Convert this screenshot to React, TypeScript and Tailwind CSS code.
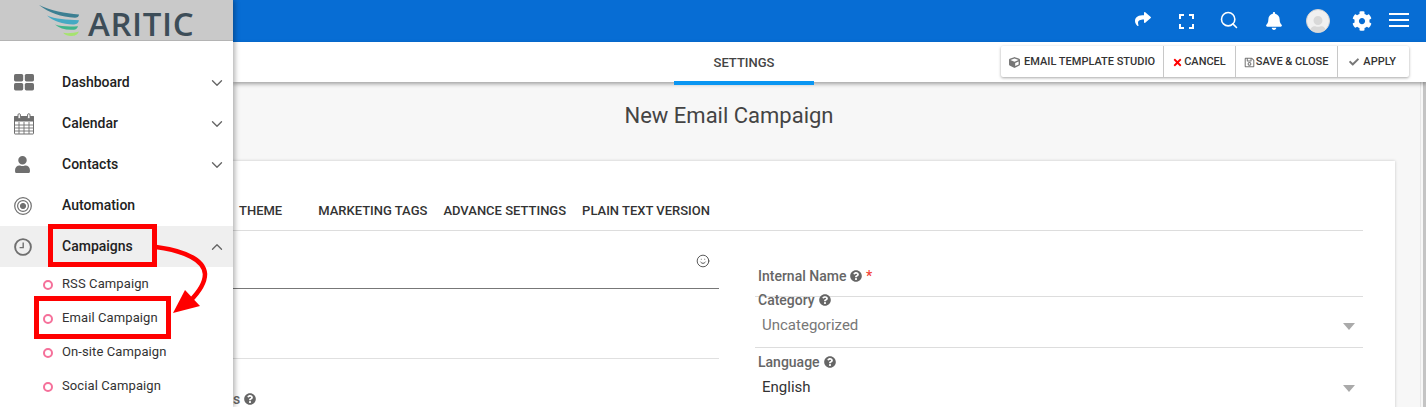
import React from 'react'
import { ChevronDown, ChevronUp, Search, Smile } from 'lucide-react'
import { FaBell, FaCheck, FaCog, FaCube, FaQuestionCircle, FaRegSave, FaShare, FaTimes, FaUser } from 'react-icons/fa'

const font = "font-['Roboto','Liberation_Sans',sans-serif]"

function DashIcon() {
  return (
    <svg width="20" height="17" viewBox="0 0 20 17" fill="#6f6f6f">
      <rect x="0" y="0" width="9.2" height="7.4" rx="1.6" />
      <rect x="10.8" y="0" width="9.2" height="7.4" rx="1.6" />
      <rect x="0" y="9" width="9.2" height="7.4" rx="1.6" />
      <rect x="10.8" y="9" width="9.2" height="7.4" rx="1.6" />
    </svg>
  )
}

function CalendarIcon() {
  return (
    <svg width="20" height="22" viewBox="0 0 20 22" fill="none" stroke="#6f6f6f">
      <path d="M1 3.5h18a.5.5 0 0 1 .5.5v16.5a.5.5 0 0 1-.5.5H1a.5.5 0 0 1-.5-.5V4a.5.5 0 0 1 .5-.5z" />
      <path d="M.5 3.5h19V8H.5z" fill="#6f6f6f" />
      <path d="M5 9v12M10 9v12M15 9v12M1 12h18M1 15h18M1 18h18" strokeWidth="0.9" />
      <rect x="4" y="0.7" width="2.4" height="5" rx="1.2" fill="#fff" />
      <rect x="13.6" y="0.7" width="2.4" height="5" rx="1.2" fill="#fff" />
    </svg>
  )
}

function TargetIcon() {
  return (
    <svg width="18" height="18" viewBox="0 0 18 18" fill="none" stroke="#6f6f6f">
      <circle cx="9" cy="9" r="8.3" strokeWidth="1.2" />
      <circle cx="9" cy="9" r="5.4" strokeWidth="1.2" />
      <circle cx="9" cy="9" r="2.6" fill="#6f6f6f" />
    </svg>
  )
}

function ClockIcon() {
  return (
    <svg width="18" height="18" viewBox="0 0 18 18" fill="none" stroke="#6f6f6f">
      <circle cx="9" cy="9" r="7.9" strokeWidth="1.9" />
      <path d="M9.2 4.6v5H5.6" strokeWidth="1.4" />
    </svg>
  )
}

function Logo() {
  return (
    <div className="h-[41px] bg-[#c9c9c9] border-b border-[#b4b4b4] flex items-center pl-[39px]">
      <svg width="42" height="32" viewBox="0 0 42 32" className="mt-[1px] shrink-0">
        <path d="M0 0C12 6 26 8 40 9.5 40 12 38 12.6 36 12.7 22 12 10 8 0 0z" fill="#3c7f92" />
        <path d="M8 10.5C16 14 28 15 40 15.2 39 19 37 19.4 34 19.4 24 19.4 14 16 8 10.5z" fill="#45a9c3" />
        <path d="M16 19.5C22 21.5 30 21.8 39 21.2 38 24.3 36 24.7 33 24.8 26 25 20 23 16 19.5z" fill="#3fb58b" />
        <path d="M24 27.8C29 28.8 35 28 40 26.5 38 30.5 35 31 32 31 29 31 26 30 24 27.8z" fill="#a6e36f" />
      </svg>
      <span className="text-[33px] leading-[33px] ml-[7px] tracking-[0.6px] text-[#3d4d58] font-['Open_Sans',sans-serif] font-semibold mt-[6px]">ARITIC</span>
    </div>
  )
}

function NavRow({ icon, label, chevron, active }: { icon: React.ReactNode; label: string; chevron?: 'down' | 'up'; active?: boolean }) {
  return (
    <div className={`h-[41px] flex items-center ${active ? 'bg-[#efefef]' : ''}`}>
      <div className="w-[62px] pl-[14px] shrink-0 flex items-center">{icon}</div>
      <span className="text-[14px] font-medium text-[#222]">{label}</span>
      {chevron === 'down' && <ChevronDown size={18} strokeWidth={1.8} className="ml-auto mr-[7px] text-[#666]" />}
      {chevron === 'up' && <ChevronUp size={18} strokeWidth={1.8} className="ml-auto mr-[7px] text-[#666]" />}
    </div>
  )
}

function SubRow({ label }: { label: string }) {
  return (
    <div className="h-[34px] flex items-center pl-[43px]">
      <span className="w-[10px] h-[10px] rounded-full border-2 border-[#f5709a] mr-[9px] mt-[1px] shrink-0" />
      <span className="text-[13px] text-[#333] tracking-[0.1px]">{label}</span>
    </div>
  )
}

function Sidebar() {
  return (
    <aside className="w-[233px] h-[407px] shrink-0 bg-white relative z-20 shadow-[2px_0_5px_rgba(0,0,0,0.3)]">
      <Logo />
      <div className="pt-[21px]">
        <NavRow icon={<DashIcon />} label="Dashboard" chevron="down" />
        <NavRow icon={<CalendarIcon />} label="Calendar" chevron="down" />
        <NavRow icon={<FaUser size={17} color="#6f6f6f" />} label="Contacts" chevron="down" />
        <NavRow icon={<TargetIcon />} label="Automation" />
        <NavRow icon={<ClockIcon />} label="Campaigns" chevron="up" active />
        <SubRow label="RSS Campaign" />
        <SubRow label="Email Campaign" />
        <SubRow label="On-site Campaign" />
        <SubRow label="Social Campaign" />
      </div>
    </aside>
  )
}

function TopBar() {
  return (
    <header className="h-[42px] bg-[#076dd4] flex items-center justify-end text-white">
      <FaShare size={16} className="mr-[28px] -mt-[5px]" />
      <svg width="15" height="15" viewBox="0 0 15 15" fill="none" stroke="#fff" strokeWidth="2" className="mr-[25px]">
        <path d="M1 5V1h4M10 1h4v4M14 10v4h-4M5 14H1v-4" />
      </svg>
      <Search size={20} strokeWidth={1.9} className="mr-[26px] -mt-[2px]" />
      <FaBell size={18} className="mr-[23px]" />
      <div className="w-[24px] h-[24px] rounded-full bg-[#f0f0f0] border border-[#d4d4d4] mr-[22px] flex items-end justify-center overflow-hidden">
        <FaUser size={18} color="#d8d8d8" className="-mb-[2px]" />
      </div>
      <FaCog size={20} className="mr-[17px]" />
      <div className="w-[20px] mr-[17px] flex flex-col gap-[4px] -mt-[2px]">
        <div className="h-[2px] bg-white" />
        <div className="h-[2px] bg-white" />
        <div className="h-[2px] bg-white" />
      </div>
    </header>
  )
}

function ActionButton({ icon, label, className }: { icon: React.ReactNode; label: string; className: string }) {
  return (
    <div className={`h-[31px] flex items-center text-[11px] font-medium text-[#333] whitespace-nowrap pt-[1px] ${className}`}>
      {icon}
      <span>{label}</span>
    </div>
  )
}

function TabBar() {
  return (
    <div className="h-[40px] bg-white shadow-[0_2px_4px_rgba(0,0,0,0.35)] relative z-10 flex">
      <div className="ml-[441px] w-[140px] h-[43px] border-b-[4px] border-[#0a96f2] flex items-center justify-center text-[13px] font-medium text-[#444] pt-[3px]">SETTINGS</div>
      <div className="ml-auto mr-[17px] mt-[4px] h-[31px] flex bg-white rounded-[2px] shadow-[0_1px_3px_rgba(0,0,0,0.35)]">
        <ActionButton icon={<FaCube size={11} color="#777" />} label="EMAIL TEMPLATE STUDIO" className="pl-[8px] pr-[8px] gap-[4px] border-r border-[#c8c8c8]" />
        <ActionButton icon={<FaTimes size={11} color="#f00" />} label="CANCEL" className="pl-[8px] pr-[9px] gap-[1px] border-r border-[#c8c8c8]" />
        <ActionButton icon={<FaRegSave size={11} color="#777" />} label="SAVE & CLOSE" className="pl-[8px] pr-[9px] gap-[1px] border-r border-[#c8c8c8]" />
        <ActionButton icon={<FaCheck size={10} color="#777" />} label="APPLY" className="pl-[11px] pr-[13px] gap-[4px]" />
      </div>
    </div>
  )
}

function Help() {
  return <FaQuestionCircle size={12} className="inline-block text-[#666] ml-[4px] align-[-1px]" />
}

function SelectField({ label, value, muted }: { label: string; value: string; muted?: boolean }) {
  return (
    <div>
      <div className="text-[14px] font-medium text-[#666] pl-[3px] leading-[15px]">{label}<Help /></div>
      <div className="h-[34px] flex items-center pl-[7px] pr-[8px]">
        <span className={`text-[15px] ${muted ? 'text-[#777]' : 'text-[#333]'}`}>{value}</span>
        <span className="ml-auto mt-[3px] w-0 h-0 border-x-[6px] border-x-transparent border-t-[7px] border-t-[#aaa]" />
      </div>
    </div>
  )
}

function Card() {
  return (
    <section className="ml-[-20px] mr-[25px] mt-[32px] h-[300px] bg-white shadow-[0_0_3px_rgba(0,0,0,0.2)] pl-[20px] pr-[32px]">
      <div className="h-[70px] border-b border-[#ddd] flex items-end pb-[10px] gap-[16px] text-[13px] font-medium text-[#333] whitespace-nowrap">
        <span className="ml-[6px] mr-[20px]">THEME</span>
        <span>MARKETING TAGS</span>
        <span>ADVANCE SETTINGS</span>
        <span>PLAIN TEXT VERSION</span>
      </div>
      <div className="flex">
        <div className="w-[486px] shrink-0">
          <div className="h-[58px] border-b border-[#777] flex justify-end items-start pt-[23px] pr-[9px]">
            <Smile size={14} strokeWidth={1.5} className="text-[#444]" />
          </div>
          <div className="h-[70px] border-b border-[#e0e0e0]" />
          <div className="text-[14px] font-medium text-[#666] mt-[33px] leading-[15px]">s<Help /></div>
        </div>
        <div className="ml-[36px] flex-1">
          <div className="h-[66px] border-b border-[#ddd] pt-[38px] pl-[3px] text-[14px] font-medium text-[#666] leading-[15px]">
            Internal Name<Help /> <span className="text-[#f44336]">*</span>
          </div>
          <div className="-mt-[4px] h-[55px] border-b border-[#ddd]">
            <SelectField label="Category" value="Uncategorized" muted />
          </div>
          <div className="mt-[7px]">
            <SelectField label="Language" value="English" />
          </div>
        </div>
      </div>
    </section>
  )
}

function Annotations() {
  return (
    <div className="absolute inset-0 z-30 pointer-events-none">
      <div className="absolute left-[48px] top-[224px] w-[109px] h-[43px] border-[5px] border-[#f00]" />
      <div className="absolute left-[34px] top-[296px] w-[137px] h-[43px] border-[5px] border-[#f00]" />
      <svg width="1426" height="407" className="absolute inset-0" fill="none">
        <path d="M156 247C185 251 204 260 205 274 205 284 198 293 190 301" stroke="#f00" strokeWidth="4.5" />
        <path d="M173 313L185 290 200 306z" fill="#f00" />
      </svg>
    </div>
  )
}

export default function App() {
  return (
    <div className={`${font} relative w-[1426px] h-[407px] overflow-hidden flex bg-[#f7f7f7]`}>
      <Sidebar />
      <main className="flex-1 min-w-0">
        <TopBar />
        <TabBar />
        <div className="flex">
          <div className="flex-1 min-w-0">
            <h1 className="text-[22px] leading-[26px] text-[#444] text-center mt-[21px] w-[992px]">New Email Campaign</h1>
            <Card />
          </div>
          <div className="w-[6px] h-[325px] border-l border-[#e6e6e6] flex justify-end">
            <div className="w-[3px] h-full bg-[#c4c4c4]" />
          </div>
        </div>
      </main>
      <Annotations />
    </div>
  )
}
